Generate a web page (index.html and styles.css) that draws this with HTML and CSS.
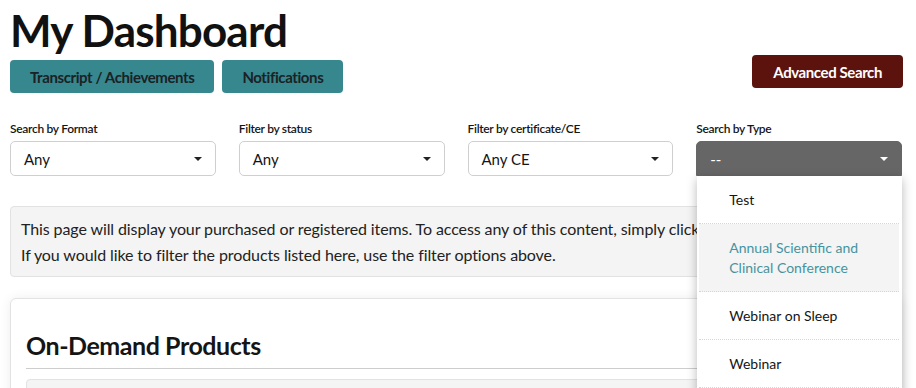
FILE: index.html
```html
<!DOCTYPE html>
<html lang="en">
<head>
  <meta charset="UTF-8" />
  <meta name="viewport" content="width=device-width, initial-scale=1.0"/>
  <title>My Dashboard</title>
  <link rel="stylesheet" href="styles.css">
</head>
<body>
  <div class="page">
    <h1>My Dashboard</h1>

    <div class="toolbar">
      <div class="toolbar-left">
        <button class="btn btn-teal">Transcript / Achievements</button>
        <button class="btn btn-teal">Notifications</button>
      </div>
      <button class="btn btn-dark">Advanced Search</button>
    </div>

    <!-- Filters -->
    <div class="filters">
      <div class="filter">
        <label>Search by Format</label>
        <div class="select"><span>Any</span><i class="caret"></i></div>
      </div>
      <div class="filter">
        <label>Filter by status</label>
        <div class="select"><span>Any</span><i class="caret"></i></div>
      </div>
      <div class="filter">
        <label>Filter by certificate/CE</label>
        <div class="select"><span>Any CE</span><i class="caret"></i></div>
      </div>
      <div class="filter">
        <label>Search by Type</label>
        <div class="select open"><span>--</span><i class="caret"></i></div>
        <ul class="dropdown">
          <li>Test</li>
          <li class="active">Annual Scientific and Clinical Conference</li>
          <li>Webinar on Sleep</li>
          <li>Webinar</li>
        </ul>
      </div>
    </div>

    <div class="info">
      This page will display your purchased or registered items. To access any of this content, simply click on the title.<br>
      If you would like to filter the products listed here, use the filter options above.
    </div>

    <div class="card">
      <h2>On-Demand Products</h2>
      <div class="product"></div>
    </div>
  </div>
</body>
</html>
```

FILE: styles.css
```css
:root {
  --teal: #37878f;
  --dark-red: #5c130e;
  --border: #cfcfcf;
  --panel: #f4f4f4;
  --text: #151515;
}

* {
  box-sizing: border-box;
}

body {
  margin: 0;
  font-family: 'Lato', 'Liberation Sans', sans-serif;
  color: var(--text);
  background: #fff;
  overflow: hidden;
}

.page {
  padding: 0 14px 0 10px;
}

h1 {
  margin: 6px 0 0 0;
  font-size: 44px;
  line-height: 48px;
  font-weight: 700;
  letter-spacing: -0.8px;
  color: #111;
}

.toolbar {
  display: flex;
  justify-content: space-between;
  align-items: flex-start;
  margin-top: 2px;
}

.toolbar-left {
  display: flex;
  gap: 8px;
  margin-top: 4px;
}

.btn {
  height: 33px;
  padding: 0 20px;
  border: none;
  border-radius: 4px;
  font-family: inherit;
  font-size: 15px;
  font-weight: 700;
  letter-spacing: -0.4px;
  cursor: pointer;
}

.btn-teal {
  background: var(--teal);
  color: #1a2224;
}

.btn-dark {
  background: var(--dark-red);
  color: #fff;
  padding: 0 21px;
  margin-top: -1px;
  margin-right: -1px;
}

/* Filters */
.filters {
  display: grid;
  grid-template-columns: repeat(4, 1fr);
  column-gap: 23px;
  margin-top: 28px;
}

.filter {
  position: relative;
}

.filter label {
  display: block;
  font-size: 12px;
  line-height: 16px;
  font-weight: 600;
  letter-spacing: -0.3px;
  margin-bottom: 4px;
}

.select {
  display: flex;
  align-items: center;
  justify-content: space-between;
  height: 35px;
  padding: 0 13px 0 13px;
  border: 1px solid var(--border);
  border-radius: 5px;
  font-size: 15px;
  background: #fff;
}

.select.open {
  background: #666;
  border-color: #666;
  color: #fff;
  border-radius: 5px 5px 0 0;
}

.caret {
  width: 0;
  height: 0;
  border-left: 4px solid transparent;
  border-right: 4px solid transparent;
  border-top: 4px solid #222;
}

.select.open .caret {
  border-top-color: #fff;
}

.dropdown {
  position: absolute;
  top: 55px;
  left: 1px;
  right: 0;
  margin: 0;
  padding: 0 3px 30px 2px;
  list-style: none;
  background: #fff;
  box-shadow: 0 3px 10px rgba(0,0,0,0.28);
  z-index: 10;
}

.dropdown li {
  padding: 14px 20px 13px 30px;
  font-size: 14px;
  line-height: 20px;
  border-bottom: 1px dotted #d6d6d6;
}

.dropdown li.active {
  background: var(--panel);
  color: #46939e;
}

/* Content */
.info {
  margin-top: 30px;
  padding: 9px 10px 8px;
  background: var(--panel);
  border: 1px solid #e2e2e2;
  border-radius: 4px;
  font-size: 16px;
  line-height: 26px;
  letter-spacing: -0.1px;
  color: #222;
  white-space: nowrap;
}

.card {
  margin-top: 21px;
  padding: 16px 15px;
  height: 200px;
  background: #fff;
  border: 1px solid #e2e2e2;
  border-radius: 6px;
  box-shadow: 0 0 12px rgba(0,0,0,0.07);
}

.card h2 {
  margin: 15px 0 0 0;
  padding-bottom: 8px;
  font-size: 25px;
  line-height: 30px;
  font-weight: 700;
  letter-spacing: -0.45px;
  border-bottom: 1px solid #cdcdcd;
}

.product {
  margin-top: 10px;
  height: 80px;
  background: var(--panel);
  border: 1px solid #e2e2e2;
  border-radius: 4px;
}
```
